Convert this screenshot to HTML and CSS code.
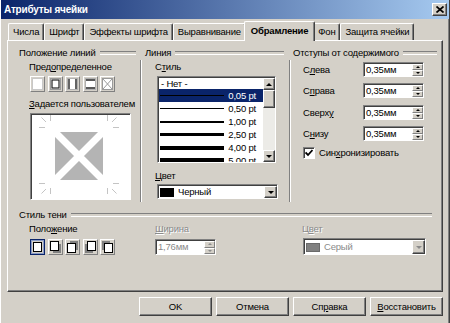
FILE: index.html
```html
<!DOCTYPE html>
<html lang="ru">
<head>
  <meta charset="UTF-8">
  <title>Атрибуты ячейки</title>
  <link rel="stylesheet" href="styles.css">
</head>
<body>
  <div class="window">
    <div class="titlebar">
      <span class="title">Атрибуты ячейки</span>
      <span class="close-btn">
        <svg width="8" height="7" viewBox="0 0 8 7"><path d="M0.5 0.5 L7.5 6.5 M7.5 0.5 L0.5 6.5" stroke="#000" stroke-width="1.7"/></svg>
      </span>
    </div>

    <div class="tabs">
      <div class="tab">Числа</div>
      <div class="tab">Шрифт</div>
      <div class="tab">Эффекты шрифта</div>
      <div class="tab">Выравнивание</div>
      <div class="tab active">Обрамление</div>
      <div class="tab">Фон</div>
      <div class="tab">Защита ячейки</div>
    </div>

    <div class="panel">
      <!-- Положение линий -->
      <div class="col col-lines">
        <div class="fixed-line">Положение линий</div>
        <div class="col-body sep">
          <div class="label">Пред<u>о</u>пределенное</div>
          <div class="presets">
            <span class="icon-box"><svg width="13" height="14" viewBox="0 0 13 14"><rect x="1.5" y="1.5" width="10" height="11" fill="#fff" stroke="#c8c8c8"/></svg></span>
            <span class="icon-box"><svg width="13" height="14" viewBox="0 0 13 14"><rect x="1.5" y="1.5" width="10" height="11" fill="#fff" stroke="#9a9a9a"/><rect x="3" y="3" width="7" height="8" fill="#fff" stroke="#222" stroke-width="1.2"/></svg></span>
            <span class="icon-box"><svg width="13" height="14" viewBox="0 0 13 14"><rect x="1.5" y="1.5" width="10" height="11" fill="#fff" stroke="#b0b0b0"/><path d="M3 2 V12 M10 2 V12" stroke="#222" stroke-width="1.4"/></svg></span>
            <span class="icon-box"><svg width="13" height="14" viewBox="0 0 13 14"><rect x="1.5" y="1.5" width="10" height="11" fill="#fff" stroke="#b0b0b0"/><path d="M2 3 H11 M2 11 H11" stroke="#222" stroke-width="1.4"/></svg></span>
            <span class="icon-box"><svg width="13" height="14" viewBox="0 0 13 14"><rect x="1.5" y="1.5" width="10" height="11" fill="#fff" stroke="#9a9a9a"/><path d="M2 2 L11 12 M11 2 L2 12" stroke="#9a9a9a"/></svg></span>
          </div>
          <div class="label label-gap"><u>З</u>адается пользователем</div>
          <div class="user-box">
            <svg width="97" height="83" viewBox="0 0 97 83">
              <rect x="23" y="17" width="48" height="48" fill="#b4b4b4"/>
              <path d="M23 17 L71 65 M71 17 L23 65" stroke="#fff" stroke-width="7"/>
              <g stroke="#c4c4c4" stroke-width="1">
                <path d="M18.5 0 V6 M7 12.5 H13 M9.5 2.5 L14 7"/>
                <path d="M75.5 0 V6 M81 12.5 H87 M80 7 L84.5 2.5"/>
                <path d="M18.5 73 V79 M7 68.5 H13 M9.5 78.5 L14 74"/>
                <path d="M75.5 73 V79 M81 68.5 H87 M80 74 L84.5 78.5"/>
              </g>
            </svg>
          </div>
        </div>
      </div>

      <!-- Линия -->
      <div class="col col-style">
        <div class="fixed-line">Линия</div>
        <div class="col-body sep">
          <div class="label">С<u>т</u>иль</div>
          <div class="listbox">
            <div class="list-items">
              <div class="list-row first">- Нет -</div>
              <div class="list-row selected"><span class="stroke s1"></span><span class="pt">0,05 pt</span></div>
              <div class="list-row"><span class="stroke s1"></span><span class="pt">0,50 pt</span></div>
              <div class="list-row"><span class="stroke s2"></span><span class="pt">1,00 pt</span></div>
              <div class="list-row"><span class="stroke s3"></span><span class="pt">2,50 pt</span></div>
              <div class="list-row"><span class="stroke s4"></span><span class="pt">4,00 pt</span></div>
              <div class="list-row"><span class="stroke s5"></span><span class="pt">5,00 pt</span></div>
            </div>
            <div class="scrollbar">
              <span class="sb-btn sb-up"></span>
              <span class="sb-thumb"></span>
              <span class="sb-track"></span>
              <span class="sb-btn sb-down"></span>
            </div>
          </div>
          <div class="label color-label"><u>Ц</u>вет</div>
          <div class="dropdown line-color">
            <span class="swatch"></span>
            <span class="dd-text">Черный</span>
            <span class="dd-btn"></span>
          </div>
        </div>
      </div>

      <!-- Отступы от содержимого -->
      <div class="col col-spacing">
        <div class="fixed-line">Отступы от содержимого</div>
        <div class="col-body">
          <div class="spin-row">
            <span class="spin-label">С<u>л</u>ева</span>
            <div class="spin"><span class="spin-value">0,35мм</span><span class="spin-btns"><span class="spin-up"></span><span class="spin-down"></span></span></div>
          </div>
          <div class="spin-row">
            <span class="spin-label">С<u>п</u>рава</span>
            <div class="spin"><span class="spin-value">0,35мм</span><span class="spin-btns"><span class="spin-up"></span><span class="spin-down"></span></span></div>
          </div>
          <div class="spin-row">
            <span class="spin-label">Сверх<u>у</u></span>
            <div class="spin"><span class="spin-value">0,35мм</span><span class="spin-btns"><span class="spin-up"></span><span class="spin-down"></span></span></div>
          </div>
          <div class="spin-row">
            <span class="spin-label">С<u>н</u>изу</span>
            <div class="spin"><span class="spin-value">0,35мм</span><span class="spin-btns"><span class="spin-up"></span><span class="spin-down"></span></span></div>
          </div>
          <div class="check-row">
            <span class="checkbox"><svg width="8" height="8" viewBox="0 0 8 8"><path d="M0.5 3.5 L3 6 L7.5 1" fill="none" stroke="#000" stroke-width="1.8"/></svg></span>
            <span>Син<u>х</u>ронизировать</span>
          </div>
        </div>
      </div>

      <!-- Стиль тени -->
      <div class="shadow">
        <div class="fixed-line">Стиль тени</div>
        <div class="shadow-col">
          <div class="label">Поло<u>ж</u>ение</div>
          <div class="shadow-icons">
            <span class="icon-box chosen"><svg width="11" height="12" viewBox="0 0 11 12"><rect x="1.5" y="1.5" width="8" height="9" fill="#fff" stroke="#000"/></svg></span>
            <span class="icon-box"><svg width="11" height="12" viewBox="0 0 11 12"><rect x="3" y="3" width="8" height="9" fill="#808080"/><rect x="0.5" y="0.5" width="8" height="9" fill="#fff" stroke="#000"/></svg></span>
            <span class="icon-box"><svg width="11" height="12" viewBox="0 0 11 12"><rect x="3" y="0" width="8" height="9" fill="#808080"/><rect x="0.5" y="2.5" width="8" height="9" fill="#fff" stroke="#000"/></svg></span>
            <span class="icon-box"><svg width="11" height="12" viewBox="0 0 11 12"><rect x="0" y="3" width="8" height="9" fill="#808080"/><rect x="2.5" y="0.5" width="8" height="9" fill="#fff" stroke="#000"/></svg></span>
            <span class="icon-box"><svg width="11" height="12" viewBox="0 0 11 12"><rect x="0" y="0" width="8" height="9" fill="#808080"/><rect x="2.5" y="2.5" width="8" height="9" fill="#fff" stroke="#000"/></svg></span>
          </div>
        </div>
        <div class="shadow-col">
          <div class="label disabled"><u>Ш</u>ирина</div>
          <div class="spin disabled shadow-width"><span class="spin-value">1,76мм</span><span class="spin-btns"><span class="spin-up"></span><span class="spin-down"></span></span></div>
        </div>
        <div class="shadow-col">
          <div class="label disabled shadow-color-label">Ц<u>в</u>ет</div>
          <div class="dropdown disabled shadow-color">
            <span class="swatch gray"></span>
            <span class="dd-text">Серый</span>
            <span class="dd-btn"></span>
          </div>
        </div>
      </div>
    </div>

    <div class="buttons">
      <button class="btn">OK</button>
      <button class="btn">Отмена</button>
      <button class="btn">Сп<u>р</u>авка</button>
      <button class="btn"><u>В</u>осстановить</button>
    </div>
  </div>
</body>
</html>
```

FILE: styles.css
```css
* {
  margin: 0;
  padding: 0;
  box-sizing: border-box;
}
body {
  background: #d4d0c8;
  font-family: "Liberation Sans", Arial, sans-serif;
  font-size: 9.5px;
  letter-spacing: -0.2px;
  color: #000;
}
u {
  text-decoration: underline;
}
.window {
  width: 450px;
  height: 323px;
  border-left: 1px solid #fff;
  border-right: 1px solid #404040;
  box-shadow: inset -1px 0 #808080;
}

/* title bar */
.titlebar {
  height: 19px;
  display: flex;
  align-items: center;
  justify-content: space-between;
  padding: 0 2px 0 3px;
  background: linear-gradient(to right, #0a246a, #a6caf0);
}
.title {
  color: #fff;
  font-weight: bold;
  font-size: 10px;
}
.close-btn {
  width: 15px;
  height: 13px;
  display: flex;
  align-items: center;
  justify-content: center;
  background: #d4d0c8;
  border: 1px solid;
  border-color: #fff #404040 #404040 #fff;
  box-shadow: inset -1px -1px #808080;
}

/* tabs */
.tabs {
  display: flex;
  align-items: flex-end;
  height: 19px;
  margin-top: 2px;
  padding-left: 7px;
}
.tab {
  height: 17px;
  line-height: 15px;
  padding: 0 4px;
  border: 1px solid;
  border-bottom: none;
  border-color: #fff #404040 #fff #fff;
  border-radius: 2px 2px 0 0;
  box-shadow: inset -1px 0 #808080;
  white-space: nowrap;
}
.tab.active {
  position: relative;
  z-index: 1;
  height: 20px;
  line-height: 17px;
  margin: 0 -2px -1px;
  padding: 0 6px;
  font-weight: bold;
  background: #d4d0c8;
}

/* page of the dialog */
.panel {
  margin-left: 6px;
  width: 436px;
  height: 252px;
  border: 1px solid;
  border-color: #fff #404040 #404040 #fff;
  box-shadow: inset -1px -1px #808080;
  padding: 5px 5px 0 11px;
  display: grid;
  grid-template-columns: 126px 148px 1fr;
  align-content: start;
}
.fixed-line {
  display: flex;
  align-items: center;
  gap: 4px;
  height: 13px;
  white-space: nowrap;
  margin-right: 9px;
}
.fixed-line::after {
  content: "";
  flex: 1;
  height: 2px;
  border-top: 1px solid #808080;
  border-bottom: 1px solid #fff;
}
.col-spacing .fixed-line {
  margin-right: 0;
}
.col-body {
  margin-top: 1px;
  height: 142px;
}
.col-body.sep {
  border-right: 1px solid #808080;
  box-shadow: 1px 0 #fff;
}
.col-lines .col-body {
  margin-right: 4px;
}
.col-style .col-body {
  margin-right: 3px;
}
.label {
  line-height: 13px;
  padding-left: 10px;
  white-space: nowrap;
}
.label-gap {
  margin-top: 5px;
}
.label.disabled {
  color: #8a8a8a;
  text-shadow: 1px 1px #fff;
}

/* small picture buttons */
.presets,
.shadow-icons {
  display: flex;
  gap: 2.5px;
  margin: 3px 0 0 11px;
}
.shadow-icons {
  margin-top: 4px;
}
.icon-box {
  width: 15px;
  height: 16px;
  display: flex;
  align-items: center;
  justify-content: center;
  border: 1px solid;
  border-color: #fff #808080 #808080 #fff;
}
.icon-box.chosen {
  border: 1px solid #0a246a;
  box-shadow: inset 0 0 0 1px #8a9cc6;
}
.user-box {
  width: 101px;
  height: 87px;
  margin: 3px 0 0 11px;
  padding: 1px 0 0 1px;
  background: #fff;
  border: 1px solid;
  border-color: #808080 #fff #fff #808080;
  box-shadow: inset 1px 1px #404040;
}
.user-box svg {
  display: block;
}

/* line style list */
.listbox {
  display: flex;
  width: 119px;
  height: 87px;
  margin: 3px 0 0 12px;
  padding: 1px 0 0 1px;
  background: #fff;
  border: 1px solid;
  border-color: #808080 #fff #fff #808080;
  box-shadow: inset 1px 1px #404040;
  overflow: hidden;
}
.list-items {
  flex: 1;
  overflow: hidden;
}
.list-row {
  height: 13px;
  display: flex;
  align-items: center;
  padding: 0 7px 0 1px;
  white-space: nowrap;
}
.list-row.first {
  height: 11px;
  padding-left: 2px;
}
.list-row.selected {
  background: #0a246a;
  color: #fff;
}
.stroke {
  width: 64px;
  background: #000;
}
.s1 { height: 1px; }
.s2 { height: 2px; }
.s3 { height: 3px; }
.s4 { height: 4px; }
.s5 { height: 5px; }
.pt {
  margin-left: auto;
}
.scrollbar {
  width: 12px;
  display: flex;
  flex-direction: column;
  background: #ecebe7;
}
.sb-btn,
.sb-thumb {
  background: #d4d0c8;
  border: 1px solid;
  border-color: #fff #404040 #404040 #fff;
  box-shadow: inset -1px -1px #808080;
}
.sb-btn {
  height: 12px;
  display: flex;
  align-items: center;
  justify-content: center;
}
.sb-thumb {
  height: 18px;
}
.sb-track {
  flex: 1;
}
.sb-up::after,
.spin-up::after {
  content: "";
  border: 3px solid transparent;
  border-top: 0;
  border-bottom: 3px solid #000;
}
.sb-down::after,
.dd-btn::after,
.spin-down::after {
  content: "";
  border: 3px solid transparent;
  border-bottom: 0;
  border-top: 3px solid #000;
}
.spin-up::after,
.spin-down::after {
  border-width: 2px;
}
.spin-up::after {
  border-top: 0;
}
.spin-down::after {
  border-bottom: 0;
}

/* dropdowns */
.color-label {
  margin-top: 6px;
}
.dropdown {
  display: flex;
  align-items: center;
  height: 15px;
  padding: 1px 0 0 1px;
  background: #fff;
  border: 1px solid;
  border-color: #808080 #fff #fff #808080;
  box-shadow: inset 1px 1px #404040;
}
.line-color {
  width: 121px;
  margin: 2px 0 0 12px;
}
.swatch {
  width: 14px;
  height: 9px;
  margin-left: 1px;
  background: #000;
}
.swatch.gray {
  background: #808080;
  border: 1px solid #6a6a6a;
}
.dd-text {
  flex: 1;
  padding-left: 4px;
  line-height: 12px;
}
.dd-btn {
  width: 13px;
  align-self: stretch;
  display: flex;
  align-items: center;
  justify-content: center;
  background: #d4d0c8;
  border: 1px solid;
  border-color: #fff #404040 #404040 #fff;
  box-shadow: inset -1px -1px #808080;
}
.dropdown.disabled .dd-text {
  color: #8a8a8a;
}
.dropdown.disabled .dd-btn::after {
  border-top-color: #8a8a8a;
}

/* spin fields */
.spin-row {
  display: flex;
  align-items: center;
  height: 14px;
  margin-top: 7.5px;
}
.spin-row:first-child {
  margin-top: 3px;
}
.spin-label {
  width: 70px;
  padding-left: 10px;
}
.spin {
  display: flex;
  width: 61px;
  height: 15px;
  padding: 1px 0 0 1px;
  background: #fff;
  border: 1px solid;
  border-color: #808080 #fff #fff #808080;
  box-shadow: inset 1px 1px #404040;
}
.spin-value {
  flex: 1;
  padding-left: 1px;
  line-height: 12px;
}
.spin-btns {
  width: 11px;
  display: flex;
  flex-direction: column;
}
.spin-btns span {
  flex: 1;
  display: flex;
  align-items: center;
  justify-content: center;
  background: #d4d0c8;
  border: 1px solid;
  border-color: #fff #808080 #808080 #fff;
}
.spin.disabled .spin-value {
  color: #8a8a8a;
}
.spin.disabled .spin-btns span::after {
  border-top-color: #8a8a8a;
  border-bottom-color: #8a8a8a;
}
.check-row {
  display: flex;
  align-items: center;
  gap: 4px;
  margin: 6px 0 0 10px;
}
.checkbox {
  width: 12px;
  height: 12px;
  display: flex;
  align-items: center;
  justify-content: center;
  background: #fff;
  border: 1px solid;
  border-color: #808080 #fff #fff #808080;
  box-shadow: inset 1px 1px #404040;
}

/* shadow style */
.shadow {
  grid-column: 1 / -1;
  margin-top: 4px;
  display: grid;
  grid-template-columns: 126px 148px 1fr;
}
.shadow .fixed-line {
  grid-column: 1 / -1;
  margin-right: 5px;
}
.shadow-col {
  padding-top: 1px;
}
.shadow-color-label {
  padding-left: 9px;
}
.shadow-width {
  height: 16px;
  margin: 4px 0 0 10px;
}
.shadow-color {
  width: 123px;
  height: 17px;
  margin: 3px 0 0 10px;
}

/* bottom buttons */
.buttons {
  display: flex;
  justify-content: flex-end;
  gap: 4px;
  width: 436px;
  margin: 5px 0 0 6px;
}
.btn {
  width: 73px;
  height: 19px;
  font: inherit;
  letter-spacing: inherit;
  color: #000;
  background: #d4d0c8;
  border: 1px solid;
  border-color: #fff #404040 #404040 #fff;
  box-shadow: inset -1px -1px #808080;
}
```
